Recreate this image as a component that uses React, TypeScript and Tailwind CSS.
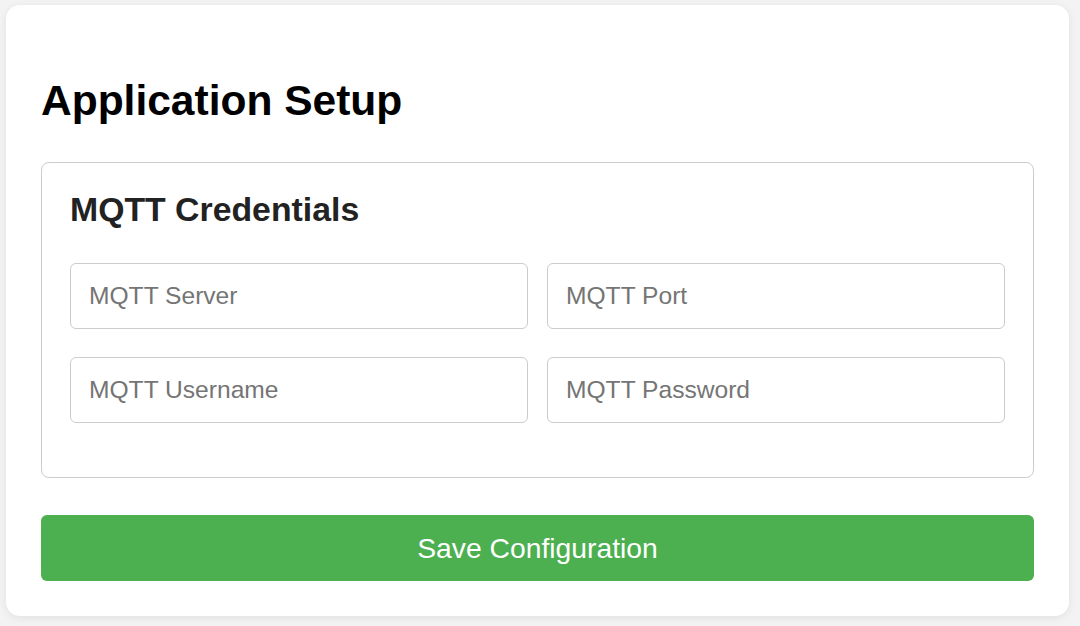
import React from "react";

export default function App() {
  const inputCls =
    "h-[66px] w-full rounded-[6px] border border-[#cccccc] bg-white px-[18px] text-[24.6px] text-[#333] placeholder:text-[#757575] outline-none";
  return (
    <div
      className="min-h-[626px] w-[1080px] bg-[#f3f3f3] pt-[5px] pl-[6px]"
      style={{ fontFamily: '"Liberation Sans", Arial, sans-serif' }}
    >
      <div className="flex h-[611px] w-[1063px] flex-col rounded-[14px] bg-white px-[35px] shadow-[0_2px_8px_rgba(0,0,0,0.08)]">
        <h1 className="mt-[71px] text-[42.5px] font-bold leading-[49px] text-black">
          Application Setup
        </h1>
        <fieldset className="mt-[37px] rounded-[8px] border border-[#cccccc] px-[28px] pt-[27px] pb-[54px]">
          <h2 className="text-[33.8px] font-bold leading-[39px] text-[#222]">
            MQTT Credentials
          </h2>
          <div className="mt-[34px] grid grid-cols-2 gap-x-[19px] gap-y-[28px]">
            <input className={inputCls} placeholder="MQTT Server" />
            <input className={inputCls} placeholder="MQTT Port" />
            <input className={inputCls} placeholder="MQTT Username" />
            <input className={inputCls} placeholder="MQTT Password" type="password" />
          </div>
        </fieldset>
        <button className="mt-[37px] h-[66px] w-full rounded-[6px] bg-[#4caf50] text-[28.3px] text-white">
          Save Configuration
        </button>
      </div>
    </div>
  );
}
